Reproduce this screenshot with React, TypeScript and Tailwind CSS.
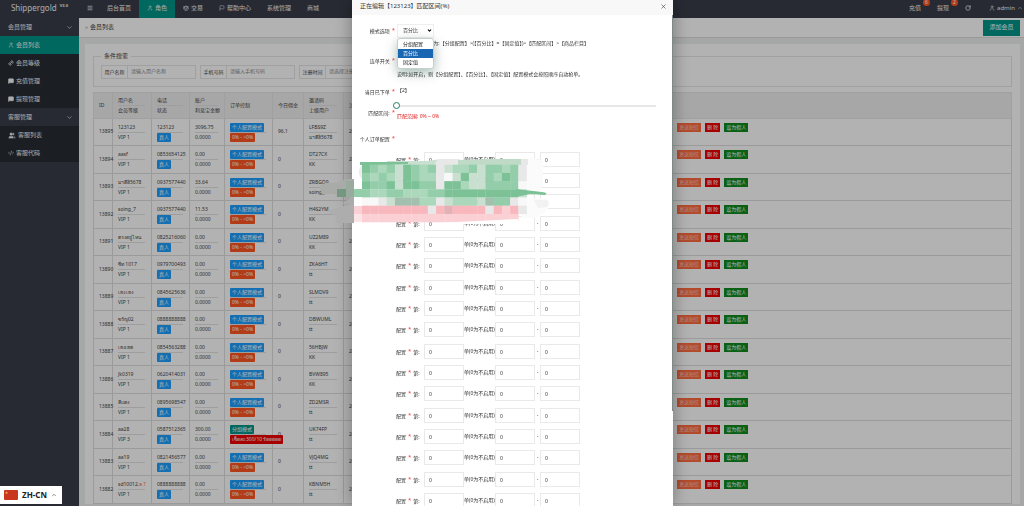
import { useState } from 'react';
import { Code2, Flag, Link2, Menu, MessageSquare, RotateCw, Scale, User, Users, X, ChevronDown, ChevronUp } from 'lucide-react';

interface Member {
  id: number;
  name: string;
  vip: string;
  phone: string;
  balance: string;
  today: string;
  code: string;
  parent: string;
  group?: boolean;
}

const members: Member[] = [
  { id: 13895, name: '123123', vip: 'VIP 1', phone: '123123', balance: '3096.75', today: '96.1', code: 'LFBS9Z', parent: 'มาดีอิ5678' },
  { id: 13894, name: 'aasf', vip: 'VIP 1', phone: '0853654125', balance: '0.00', today: '0', code: 'DT27CX', parent: 'KK' },
  { id: 13893, name: 'มาดีอิ5678', vip: 'VIP 1', phone: '0937577440', balance: '33.64', today: '0', code: 'ZRBGO9', parent: 'soing_7' },
  { id: 13892, name: 'soing_7', vip: 'VIP 1', phone: '0937577440', balance: '11.53', today: '0', code: 'H4S2YM', parent: 'KK' },
  { id: 13891, name: 'ดวงอยู่ไหน', vip: 'VIP 1', phone: '0825216060', balance: '0.00', today: '0', code: 'UZ2M89', parent: 'KK' },
  { id: 13890, name: 'ซีท 1017', vip: 'VIP 1', phone: '0979700493', balance: '0.00', today: '0', code: 'ZKA6HT', parent: 'tt' },
  { id: 13889, name: 'เฮง เฮง', vip: 'VIP 1', phone: '0845625636', balance: '0.00', today: '0', code: 'SLMDV9', parent: 'tt' },
  { id: 13888, name: 'ขวัญ02', vip: 'VIP 1', phone: '0888888888', balance: '0.00', today: '0', code: 'DBWUML', parent: 'tt' },
  { id: 13887, name: 'เฮงเฮด', vip: 'VIP 1', phone: '0854563288', balance: '0.00', today: '0', code: '56HBJW', parent: 'KK' },
  { id: 13886, name: 'Jk0319', vip: 'VIP 1', phone: '0620414031', balance: '0.00', today: '0', code: 'BVW895', parent: 'KK' },
  { id: 13885, name: 'สีแดง', vip: 'VIP 1', phone: '0895698547', balance: '0.00', today: '0', code: 'ZD2MSR', parent: 'tt' },
  { id: 13884, name: 'aa28', vip: 'VIP 3', phone: '0587512365', balance: '300.00', today: '0', code: 'UK74FP', parent: 'tt', group: true },
  { id: 13883, name: 'aa19', vip: 'VIP 1', phone: '0821456577', balance: '0.00', today: '0', code: 'VJQ4MG', parent: 'tt' },
  { id: 13882, name: 'sd10012', vip: 'VIP 1', phone: '0888888888', balance: '0.00', today: '0', code: 'KBNM5H', parent: 'tt' },
];

const icon = 'w-[6px] h-[6px] shrink-0';

const navItems = [
  { label: '后台首页' },
  { label: '角色', icon: <User className={icon} />, active: true },
  { label: '交易', icon: <Scale className={icon} /> },
  { label: '帮助中心', icon: <Flag className={icon} /> },
  { label: '系统管理' },
  { label: '商城' },
];

const sideItems = [
  { label: '会员管理', group: true },
  { label: '会员列表', icon: <User className={icon} />, active: true },
  { label: '会员等级', icon: <Link2 strokeWidth={3} className={`${icon} -rotate-45`} /> },
  { label: '充值管理', icon: <MessageSquare fill="currentColor" className={icon} /> },
  { label: '提现管理', icon: <MessageSquare fill="currentColor" className={icon} /> },
  { label: '客服管理', group: true },
  { label: '客服列表', icon: <Users fill="currentColor" className="w-[8px] h-[7px] shrink-0" /> },
  { label: '客服代码', icon: <Code2 className={icon} /> },
];

const filters = [
  { id: 'username', label: '用户名称', hint: '请输入用户名称' },
  { id: 'phone', label: '手机号码', hint: '请输入手机号码' },
  { id: 'regtime', label: '注册时间', hint: '请选择注册时间' },
];

const columns = [
  ['ID'],
  ['用户名', '会员等级'],
  ['电话', '状态'],
  ['账户', '利息宝金额'],
  ['订单控制'],
  ['今日佣金'],
  ['邀请码', '上级用户'],
  ['注册时间'],
  [],
];

const modes = ['分组配置', '百分比', '固定值'];

function Header() {
  return (
    <header className="flex h-[18px] shrink-0 bg-[#393d49] text-[#f2f2f2]">
      <div className="w-[79px] flex items-start justify-center gap-[3px] text-[8px] leading-4">
        Shippergold<sup className="top-0 text-[4px] leading-[11px] font-bold">V3.0</sup>
      </div>
      <button className="px-[8px] pb-[2px]" aria-label="菜单">
        <Menu strokeWidth={3} className={icon} />
      </button>
      <nav className="flex -ml-[2px]">
        {navItems.map((item) => (
          <a
            key={item.label}
            href="#"
            className={`flex items-center gap-[2px] px-[8px] pb-[2px] ${item.active ? 'bg-[#009688]' : ''}`}
          >
            {item.icon}
            {item.label}
          </a>
        ))}
      </nav>
      <div className="ml-auto flex items-center pb-[2px] pr-[1px]">
        <a href="#" className="relative mr-4">
          充值<Count value={6} />
        </a>
        <a href="#" className="relative mr-4">
          提现<Count value={2} />
        </a>
        <button aria-label="刷新" className="mr-[18px]">
          <RotateCw strokeWidth={3} className={icon} />
        </button>
        <button className="flex items-center gap-[2px]">
          <User className={icon} />
          admin
          <ChevronUp className={icon} />
        </button>
      </div>
    </header>
  );
}

function Count({ value }: { value: number }) {
  return (
    <span className="absolute -top-[5px] left-[14px] w-[7px] h-[7px] rounded-full bg-[#ff5722] text-white text-[5px] leading-[7px] text-center">
      {value}
    </span>
  );
}

function Sidebar() {
  return (
    <aside className="w-[79px] shrink-0 bg-[#393d49] text-[#f8f8f8]">
      {sideItems.map((item) => (
        <a
          key={item.label}
          href="#"
          className={`flex items-center gap-[2px] h-[18px] px-[8px] ${
            item.active ? 'bg-[#009688]' : item.group ? 'bg-[#393d49]' : 'bg-[#282b33]'
          }`}
        >
          {item.icon}
          {item.label}
          {item.group && <ChevronDown className="w-[7px] h-[7px] ml-auto -mr-[2px]" />}
        </a>
      ))}
    </aside>
  );
}

function Pair({ top, bottom }: { top: React.ReactNode; bottom: React.ReactNode }) {
  return (
    <>
      <div className="h-[9px] leading-[9px]">{top}</div>
      <hr className="border-[#e2e2e2] mr-[6px]" />
      <div className="h-[9px] leading-[9px]">{bottom}</div>
    </>
  );
}

function Tag({ className, children }: { className: string; children: React.ReactNode }) {
  return (
    <span className={`block w-max h-[9px] px-[2px] rounded-[1px] leading-[9px] text-white ${className}`}>
      {children}
    </span>
  );
}

function MemberRow({ member }: { member: Member }) {
  return (
    <tr className="h-[27px] even:h-[28px] [&>td]:border [&>td]:border-[#dedede] [&>td]:pl-[5px]">
      <td>{member.id}</td>
      <td>
        <Pair
          top={
            <>
              {member.name}
              {member.id === 13882 && <span className="text-[#ff5722]">.ล ?</span>}
            </>
          }
          bottom={member.vip}
        />
      </td>
      <td>
        <Pair top={member.phone} bottom={<Tag className="bg-[#1e9fff]">真人</Tag>} />
      </td>
      <td>
        <Pair top={member.balance} bottom="0.0000" />
      </td>
      <td>
        <Pair
          top={<Tag className={member.group ? 'bg-[#009688]' : 'bg-[#1e9fff]'}>{member.group ? '分组模式' : '个人配置模式'}</Tag>}
          bottom={
            member.group ? (
              <Tag className="relative bg-[#ee0000]">เซ็ตละ300/10 รัตตตตต</Tag>
            ) : (
              <Tag className="bg-[#ff5722]">0% - &gt;0%</Tag>
            )
          }
        />
      </td>
      <td>{member.today}</td>
      <td>
        <Pair top={member.code} bottom={member.parent} />
      </td>
      <td>2024</td>
      <td className="align-top">
        <div className="flex gap-[4px] pt-[4px] text-white leading-[9px]">
          <button className="h-[9px] px-[2px] bg-[#ff6b40] text-[#ffd0c0]">发送短信</button>
          <button className="h-[9px] px-[2px] bg-[#ee0000]">删 除</button>
          <button className="h-[9px] px-[2px] bg-[#0f8a1c]">设为假人</button>
        </div>
      </td>
    </tr>
  );
}

function MemberList() {
  return (
    <main className="flex-1 min-w-0 bg-[#eef0f0]">
      <div className="flex items-center h-[20px] pl-[6px] pr-[4px] bg-white border-b border-[#dcdcdc] text-[#333]">
        <span className="text-[#999] mr-[2px]">»</span>
        会员列表
        <button className="ml-auto h-[16px] w-[37px] bg-[#009688] text-white">添加会员</button>
      </div>
      <div className="mt-[6px] ml-[6px] mr-[4px] px-2 pt-2 bg-white text-[#444] text-[5px]">
        <fieldset className="flex gap-[4px] border border-[#e6e6e6] px-[7px] pt-[5px] pb-[7px] mb-[5px]">
          <legend className="px-[3px] text-[6px] leading-[8px]">条件搜索</legend>
          {filters.map((filter) => (
            <div key={filter.id} className="flex h-[14px] w-[95px] border border-[#e6e6e6]">
              <label htmlFor={filter.id} className="w-[26px] shrink-0 text-center leading-[12px] border-r border-[#e6e6e6]">
                {filter.label}
              </label>
              <input id={filter.id} placeholder={filter.hint} className="min-w-0 flex-1 pl-[3px] placeholder:text-[#888]" />
            </div>
          ))}
        </fieldset>
        <table className="w-full table-fixed border-collapse whitespace-nowrap border-r border-[#bbb]">
          <colgroup>
            <col className="w-[19px]" />
            <col className="w-[39px]" />
            <col className="w-[38px]" />
            <col className="w-[35px]" />
            <col className="w-[48px]" />
            <col className="w-[31px]" />
            <col className="w-[40px]" />
            <col className="w-[328px]" />
            <col />
          </colgroup>
          <thead>
            <tr className="h-[26px] bg-[#f0f0f0] [&>th]:border [&>th]:border-[#e6e6e6] [&>th]:pl-[5px] [&>th]:font-normal [&>th]:text-left">
              {columns.map((lines, i) => (
                <th key={i}>{lines.length === 2 ? <Pair top={lines[0]} bottom={lines[1]} /> : lines[0]}</th>
              ))}
            </tr>
          </thead>
          <tbody>
            {members.map((member) => (
              <MemberRow key={member.id} member={member} />
            ))}
          </tbody>
        </table>
      </div>
    </main>
  );
}

function Star() {
  return <span className="text-[#ff3030] text-[6px] leading-[6px] ml-[2px] self-start">*</span>;
}

function FieldLabel({ htmlFor, children }: { htmlFor: string; children: React.ReactNode }) {
  return (
    <label htmlFor={htmlFor} className="w-[45px] shrink-0 flex justify-end pr-[2px] leading-[8px]">
      {children}
      <Star />
    </label>
  );
}

function OrderRow({ index }: { index: number }) {
  const box = 'w-[40px] h-[15px] border border-[#e9e9e9] pl-[4px]';
  return (
    <div className="flex items-center h-[15px] mb-[6px] nth-[3n]:mb-[7px]">
      <label htmlFor={`order-${index}`} className="flex w-[28px] leading-[8px]">
        配置
        <Star />
        <span className="ml-[2px]">第:</span>
      </label>
      <input id={`order-${index}`} defaultValue="0" className={box} />
      <span className="w-[31px]">单(0为不启用)</span>
      <input aria-label="最小值" defaultValue="0" className={box} />
      <span className="w-[5px] text-center">-</span>
      <input aria-label="最大值" defaultValue="0" className={box} />
    </div>
  );
}

const shades: Record<string, string> = {
  G: '#7dc297',
  g: '#93cda9',
  m: '#abd7bb',
  l: '#c9e0d1',
  s: '#a3bfae',
  w: '#e8e8e8',
  W: '#f8f8f8',
  P: '#f8b7bd',
  p: '#fbd0d4',
  d: '#e3b0b4',
};

const mosaic = [
  'GgmglGgmgwlmmglggmgw',
  'gmgmlGgmmwWlGllgmGgw',
  'GggGlGGggwGGmllggggW',
  'gmmggmmmggGGGGGGGGGl',
  'WWwlsssmmwlmmmlsggwW',
  'PPPPPPPPwPdPPPPwPpPw',
  'ppppppppppppppppppp',
];

// Pixelated brush marks that hide part of the form
function Mosaic() {
  return (
    <svg className="absolute -left-[36px] top-[154px] pointer-events-none" width="240" height="76" viewBox="0 0 240 76">
      <path d="M3 33 Q8 27 20 29 L30 25 H38 V50 H26 L34 44 L18 40 L6 40Z" fill="#a9aba9" />
      <path d="M12 57 L38 49 V69 H20 V63Z" fill="#adadad" />
      <rect x="21" y="35" width="9" height="8" fill="#74987f" />
      <rect x="30" y="27" width="8" height="16" fill="#98ab9e" />
      <path d="M205 5 L218 4 L227 7 V30 L225 36 H205Z" fill="#fbfbfb" />
      <path d="M205 45 H232 V56 L220 64 H205Z" fill="#fbfbfb" />
      <path d="M218 46 H231 Q235 49 231 53 L222 54Z" fill="#f2f2f2" />
      <rect x="38" y="35" width="8" height="8" fill="#93cda9" />
      <rect x="38" y="43" width="8" height="8" fill="#fdfdfd" />
      <rect x="38" y="52" width="8" height="8" fill="#fbd0d4" />
      <rect x="38" y="60" width="8" height="8" fill="#fbe4e6" />
      <path d="M43 16 Q45 11 47 11 V26 Q42 22 43 16Z" fill="#ececec" />
      <path d="M71 11 V7 H110 L126 5 H142 V11Z" fill="#c9e0d1" />
      <path d="M118 11 L122 5 H144 V11Z" fill="#e8e8e8" />
      <path d="M142 11 V6 L176 5 L205 5 V11Z" fill="#c0dac8" />
      <rect x="205" y="5" width="7" height="6" fill="#e8e8e8" />
      <path d="M44 8 L92 8 V10 L72 11 H44Z" fill="#7dc297" />
      {mosaic.map((row, y) =>
        row.split('').map((cell, x) => (
          <rect key={`${x}-${y}`} x={46 + x * 8.23} y={10.7 + y * 8.2} width="8.5" height="8.4" fill={shades[cell]} />
        )),
      )}
      <path d="M120 69 L202 65 L204 70 H120Z" fill="#ffffff" />
      <path d="M200 35 L226 38 Q233 39 229 41 L214 40 L200 43Z" fill="#7dc297" />
    </svg>
  );
}

function EditModal() {
  const [mode, setMode] = useState('百分比');
  const [range, setRange] = useState(0);

  return (
    <div className="fixed inset-0 bg-black/30 flex justify-center pl-px">
      <section
        role="dialog"
        aria-label="正在编辑"
        className="relative w-[321px] h-full bg-white text-[#333] text-[5px] shadow-[0_0_17px_rgba(0,0,0,0.35)]"
      >
        <div className="flex items-center justify-between h-[15px] pl-[8px] pr-[6px] pb-[3px] bg-[#f8f8f8] text-[#333] text-[6px]">
          <h2>正在编辑【123123】匹配区间(%)</h2>
          <button aria-label="关闭">
            <X className="w-[7px] h-[7px]" />
          </button>
        </div>
        <form className="pt-[8px] pr-4">
          <div className="flex items-center h-[15px]">
            <FieldLabel htmlFor="mode">模式选项</FieldLabel>
            <div className="relative">
              <select
                id="mode"
                value={mode}
                onChange={(e) => setMode(e.target.value)}
                className="block w-[37px] h-[14px] pl-[5px] appearance-none border border-[#eee] bg-white"
              >
                {modes.map((m) => (
                  <option key={m}>{m}</option>
                ))}
              </select>
              <ChevronDown strokeWidth={5} className="absolute right-[2px] top-[4px] w-[5px] h-[5px] text-black pointer-events-none" />
              <ul
                role="listbox"
                className="absolute left-0 top-[14px] z-10 w-[37px] py-px bg-white border border-[#c4d0cc] rounded-[3px] shadow-[0_4px_12px_rgba(0,60,40,0.35)] text-[#222]"
              >
                {modes.map((m) => (
                  <li
                    key={m}
                    role="option"
                    aria-selected={m === mode}
                    onClick={() => setMode(m)}
                    className={`h-[9px] pl-[5px] leading-[9px] ${m === mode ? 'bg-[#1967b3] text-white' : ''}`}
                  >
                    {m}
                  </li>
                ))}
              </ul>
            </div>
          </div>
          <p className="ml-[45px] mt-px leading-[8px] whitespace-nowrap">
            说明:优先级顺序为:【分组配置】&gt;(【百分比】=【固定值】)&gt;【匹配区间】&gt;【商品栏目】
          </p>
          <div className="flex items-center h-[14px] mt-[7px]">
            <FieldLabel htmlFor="chain">连单开关</FieldLabel>
            <input id="chain" type="checkbox" className="w-[6px] h-[6px]" />
          </div>
          <p className="ml-[45px] mt-[2px] leading-[8px] whitespace-nowrap">
            说明:如开启，则【分组配置】、【百分比】、【固定值】配置模式会按照顺序自动抢单。
          </p>
          <div className="flex h-[8px] mt-[10px]">
            <FieldLabel htmlFor="today">当日已下单</FieldLabel>
            <output id="today" className="leading-[4px]">【2】</output>
          </div>
          <div className="flex items-center mt-[6px]">
            <div className="pt-[4px]">
              <FieldLabel htmlFor="range">匹配区间:</FieldLabel>
            </div>
            <div className="flex-1">
              <input
                id="range"
                type="range"
                value={range}
                onChange={(e) => setRange(Number(e.target.value))}
                className="block w-[263px] h-[7px] -ml-[4px] appearance-none bg-[linear-gradient(#e6e6e6,#e6e6e6)] bg-[length:100%_2px] bg-center bg-no-repeat [&::-webkit-slider-thumb]:appearance-none [&::-webkit-slider-thumb]:w-[7px] [&::-webkit-slider-thumb]:h-[7px] [&::-webkit-slider-thumb]:rounded-full [&::-webkit-slider-thumb]:bg-white [&::-webkit-slider-thumb]:border [&::-webkit-slider-thumb]:border-[#1d7d68]"
              />
              <p className="mt-[3px] leading-[8px] text-[#e02020]">匹配范围: {range}% ~ 0%</p>
            </div>
          </div>
          <div className="flex h-[8px] mt-[15px] mb-[9px]">
            <FieldLabel htmlFor="order-0">个人订单配置</FieldLabel>
          </div>
          <div className="ml-[44px]">
            {Array.from({ length: 17 }, (_, i) => (
              <OrderRow key={i} index={i} />
            ))}
          </div>
        </form>
        <div className="absolute right-0 top-[15px] w-px h-[396px] bg-[#7f8a86]" />
        <Mosaic />
      </section>
    </div>
  );
}

export default function App() {
  return (
    <div className="h-screen overflow-hidden flex flex-col text-[6px] font-['Noto_Sans','Noto_Sans_CJK_SC',sans-serif]">
      <Header />
      <div className="flex flex-1 min-h-0">
        <Sidebar />
        <MemberList />
      </div>
      <EditModal />
      <button className="fixed left-0 bottom-[2px] flex items-center gap-[4px] w-[62px] h-[18px] pl-[4px] bg-white text-[#222] text-[8px] font-bold">
        <svg width="14" height="10" viewBox="0 0 14 10">
          <rect width="14" height="10" rx="1" fill="#c8361d" />
          <path d="M2.500 1 l.5 1.200 1.200 .1 -.9 .8 .3 1.200 -1.100 -.7 -1.100 .7 .3 -1.200 -.9 -.8 1.200 -.1z" fill="#e8a13c" />
        </svg>
        ZH-CN
        <ChevronUp className="w-[6px] h-[6px]" />
      </button>
    </div>
  );
}
